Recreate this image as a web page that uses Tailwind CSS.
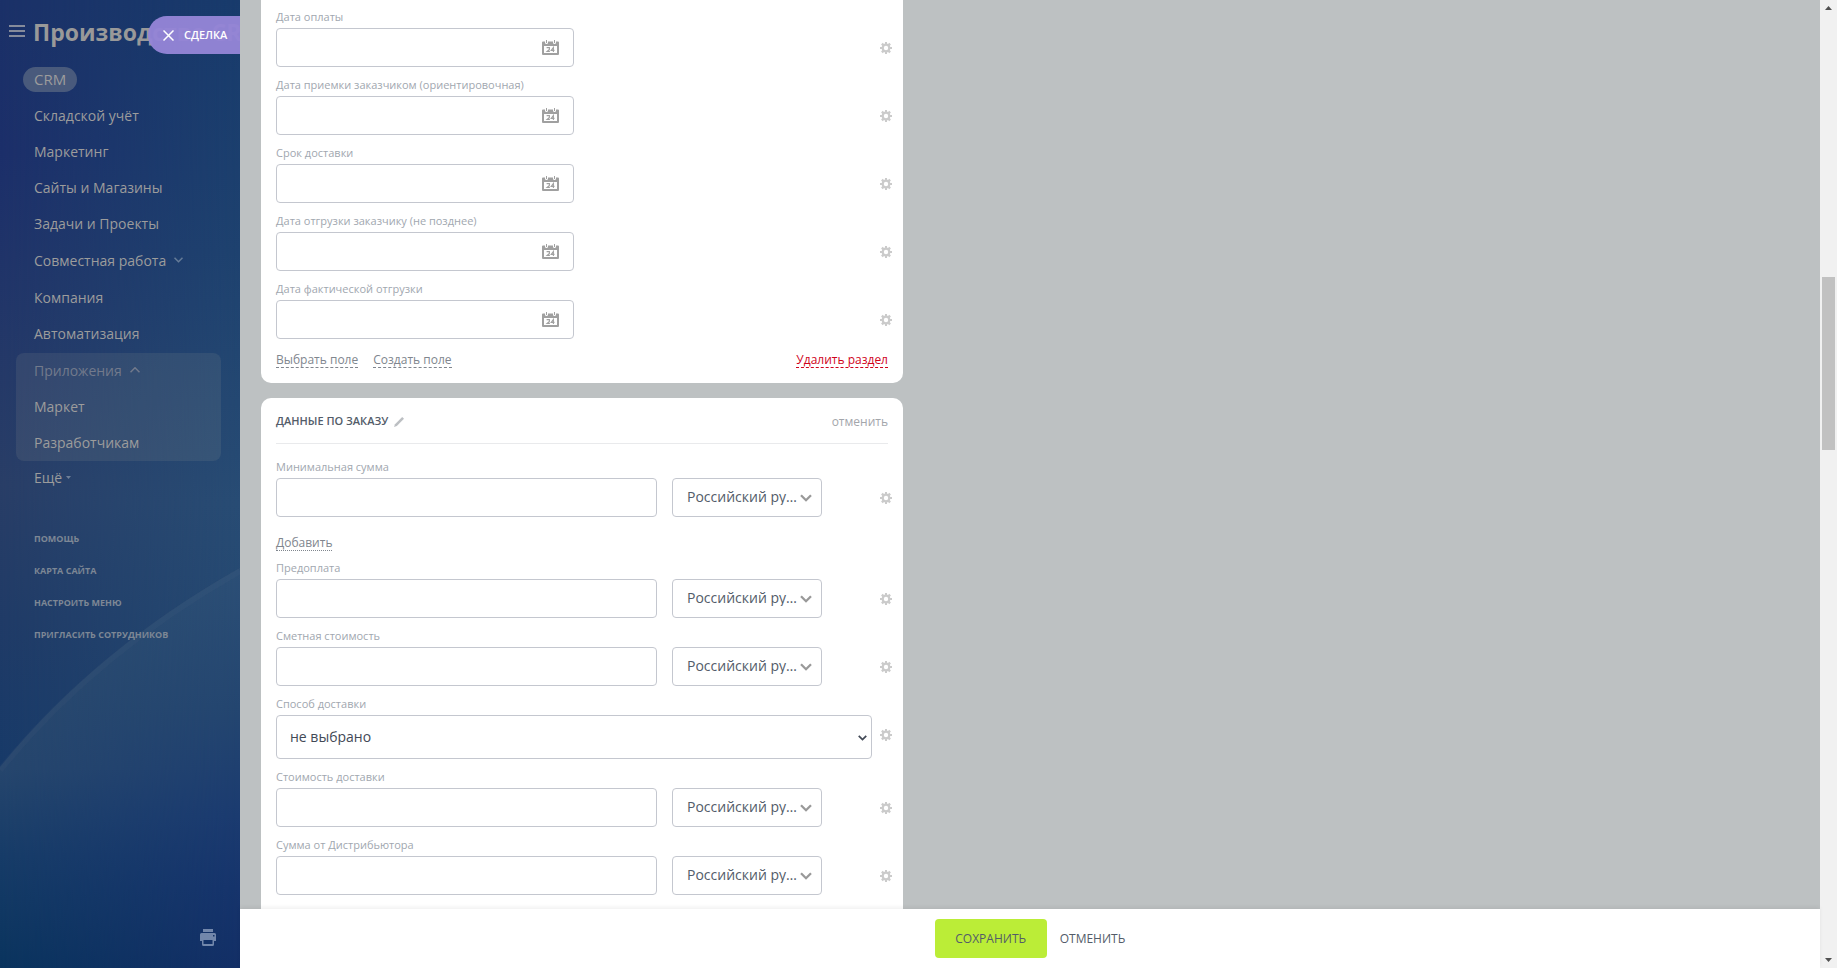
<!DOCTYPE html>
<html lang="ru">
<head>
    <meta charset="UTF-8">
    <meta name="viewport" content="width=device-width, initial-scale=1.0">
    <title>Сделка</title>
    <script src="https://cdn.jsdelivr.net/npm/@tailwindcss/browser@4"></script>
</head>
<body class="flex h-screen overflow-hidden bg-[#bdc1c2] font-['Open_Sans','Noto_Sans',sans-serif] text-[#535c69]">

    <!-- Иконки -->
    <svg class="hidden">
        <symbol id="gear" viewBox="0 0 12 12">
            <path fill="#cbcbcb" fill-rule="evenodd" d="M5 0h2v1.600l1 .4 1.300-1.200 1.600 1.600L9.800 3.800l.5 1.200H12v2h-1.700l-.5 1.200 1.100 1.400-1.600 1.600L8 10l-1 .4V12H5v-1.600L4 10l-1.300 1.200-1.600-1.600L2.200 8.200 1.700 7H0V5h1.700l.5-1.200L1.100 2.400 2.700.8 4 2l1-.4zM6 3.800a2.200 2.200 0 1 0 0 4.400 2.200 2.200 0 0 0 0-4.400z"/>
        </symbol>
        <symbol id="calendar" viewBox="0 0 17 15">
            <path fill="#a0a0a0" fill-rule="evenodd" d="M1 1.500h2v1a1.500 1.500 0 0 0 3 0v-1h5v1a1.500 1.500 0 0 0 3 0v-1h2a1 1 0 0 1 1 1V14a1 1 0 0 1-1 1H1a1 1 0 0 1-1-1V2.500a1 1 0 0 1 1-1zM2 6v7h13V6z"/>
            <path fill="#a0a0a0" d="M4 0h1v3H4zM12 0h1v3h-1z"/>
            <path fill="none" stroke="#a0a0a0" stroke-width="1.100" d="M4.600 7.600h2.800v1.900L5.100 11.400h2.800M11.400 12V7.500L9.200 10.400h3.300"/>
        </symbol>
        <symbol id="chevron" viewBox="0 0 12 8">
            <path fill="none" stroke="currentColor" stroke-width="2.300" d="M1 1.200l5 5 5-5"/>
        </symbol>
    </svg>

    <!-- Левое меню -->
    <aside class="relative flex w-60 shrink-0 flex-col overflow-hidden">
        <svg class="absolute inset-0 -z-10 h-full w-full" viewBox="0 0 240 968" preserveAspectRatio="none">
            <defs>
                <linearGradient id="skyLeft" x1="0" y1="0" x2="0" y2="1">
                    <stop offset="0" stop-color="#1b3168"/>
                    <stop offset=".16" stop-color="#1c2f6a"/>
                    <stop offset=".5" stop-color="#293e67"/>
                    <stop offset=".64" stop-color="#203b67"/>
                    <stop offset=".8" stop-color="#173a69"/>
                </linearGradient>
                <linearGradient id="skyRight" x1="0" y1="0" x2="0" y2="1">
                    <stop offset="0" stop-color="#183b6c"/>
                    <stop offset=".26" stop-color="#1e426f"/>
                    <stop offset=".52" stop-color="#284c74"/>
                    <stop offset=".7" stop-color="#234770"/>
                </linearGradient>
                <linearGradient id="hillLeft" gradientUnits="userSpaceOnUse" x1="0" y1="568" x2="0" y2="968">
                    <stop offset="0" stop-color="#2c4b6f"/>
                    <stop offset=".5" stop-color="#26466d"/>
                    <stop offset=".72" stop-color="#173c68"/>
                    <stop offset="1" stop-color="#0a345e"/>
                </linearGradient>
                <linearGradient id="hillRight" gradientUnits="userSpaceOnUse" x1="0" y1="568" x2="0" y2="968">
                    <stop offset="0" stop-color="#2c4f76"/>
                    <stop offset=".35" stop-color="#244670"/>
                    <stop offset=".62" stop-color="#1b3b70"/>
                    <stop offset=".8" stop-color="#16346c"/>
                    <stop offset="1" stop-color="#132f66"/>
                </linearGradient>
                <linearGradient id="fade" x1="0" y1="0" x2="1" y2="0">
                    <stop offset="0" stop-color="#000"/>
                    <stop offset="1" stop-color="#fff"/>
                </linearGradient>
                <mask id="toRight"><rect width="240" height="968" fill="url(#fade)"/></mask>
            </defs>
            <rect width="240" height="968" fill="url(#skyLeft)"/>
            <rect width="240" height="968" fill="url(#skyRight)" mask="url(#toRight)"/>
            <path d="M240 568Q95 650 0 767V968H240z" fill="url(#hillLeft)"/>
            <path d="M240 568Q95 650 0 767V968H240z" fill="url(#hillRight)" mask="url(#toRight)"/>
            <path d="M240 571Q95 653 0 770" fill="none" stroke="#8a9099" stroke-opacity=".05" stroke-width="6"/>
        </svg>

        <header class="flex h-[61px] items-center gap-2 pb-1.5 pl-[9px]">
            <button type="button" aria-label="Меню" class="flex w-4 shrink-0 flex-col gap-[3px] pt-1.5">
                <span class="h-0.5 bg-[#858b9b]"></span>
                <span class="h-0.5 bg-[#858b9b]"></span>
                <span class="h-0.5 bg-[#858b9b]"></span>
            </button>
            <a href="#" class="pt-2 text-[23px] font-bold leading-7 whitespace-nowrap text-[#999]">Производство CRM</a>
        </header>
        <button type="button" class="absolute top-4 right-0 flex h-[38px] w-[92px] items-center gap-2.5 rounded-l-full bg-[#9484d6]/97 pl-[15px] text-[11px] font-semibold text-white">
            <svg class="h-[11px] w-[11px]" viewBox="0 0 11 11"><path stroke="#fff" stroke-width="1.500" d="M.5.5l10 10M10.500.5l-10 10"/></svg>
            СДЕЛКА
        </button>

        <nav class="text-[14px] text-[#9c9c9c]">
            <div class="flex h-9 items-center pl-[23px]">
                <a href="#" class="flex h-[25px] items-center rounded-full bg-[#495a7c] px-[11px] text-[15px]">CRM</a>
            </div>
            <a href="#" class="flex h-9 items-center pl-[34px]">Складской учёт</a>
            <a href="#" class="flex h-9 items-center pl-[34px]">Маркетинг</a>
            <a href="#" class="flex h-9 items-center pl-[34px]">Сайты и Магазины</a>
            <a href="#" class="flex h-9 items-center pl-[34px]">Задачи и Проекты</a>
            <a href="#" class="flex h-[38px] items-center gap-2 pl-[34px]">Совместная работа
                <svg class="h-[6px] w-[9px] text-[#667c98]" viewBox="0 0 9 6"><path fill="none" stroke="currentColor" stroke-width="1.500" d="M.5.8l4 4 4-4"/></svg>
            </a>
            <a href="#" class="flex h-[37px] items-center pl-[34px]">Компания</a>
            <a href="#" class="flex h-9 items-center pb-0.5 pl-[34px]">Автоматизация</a>
            <div class="mr-[19px] ml-4 mt-px rounded-lg bg-[#b0a99f]/12">
                <a href="#" class="flex h-9 items-center gap-2 pb-0.5 pl-[18px] text-[#727a8c]">Приложения
                    <svg class="h-[6px] w-[10px]" viewBox="0 0 10 6"><path fill="none" stroke="currentColor" stroke-width="1.500" d="M.5 5.200l4.500-4.400 4.500 4.400"/></svg>
                </a>
                <a href="#" class="flex h-9 items-center pb-0.5 pl-[18px]">Маркет</a>
                <a href="#" class="flex h-9 items-center pb-0.5 pl-[18px]">Разработчикам</a>
            </div>
            <a href="#" class="flex h-[34px] items-center gap-1 pb-0.5 pl-[34px]">Ещё
                <svg class="h-[3px] w-[5px]" viewBox="0 0 5 3"><path fill="#6f7f98" d="M0 0h5L2.500 3z"/></svg>
            </a>
        </nav>

        <nav class="mt-7 text-[9px] font-bold text-[#7d8795]">
            <a href="#" class="flex h-8 items-center pl-[34px]">ПОМОЩЬ</a>
            <a href="#" class="flex h-8 items-center pl-[34px]">КАРТА САЙТА</a>
            <a href="#" class="flex h-8 items-center pl-[34px]">НАСТРОИТЬ МЕНЮ</a>
            <a href="#" class="flex h-8 items-center pl-[34px]">ПРИГЛАСИТЬ СОТРУДНИКОВ</a>
        </nav>

        <button type="button" aria-label="Печать" class="mt-auto mr-6 mb-[22px] self-end">
            <svg class="h-[17px] w-4" viewBox="0 0 16 17">
                <path fill="#7287ab" fill-rule="evenodd" d="M3 0h10v3H3zM1.500 4h13A1.500 1.500 0 0 1 16 5.500V12h-2v3.500a1.500 1.500 0 0 1-1.500 1.500h-9A1.500 1.500 0 0 1 2 15.500V12H0V5.500A1.500 1.500 0 0 1 1.500 4zM3.500 11v4h9v-4zM13 6v1.500h1.500V6z"/>
            </svg>
        </button>
    </aside>

    <!-- Карточка сделки -->
    <div class="flex min-w-0 flex-1 flex-col">
        <main class="min-h-0 flex-1 overflow-hidden pl-[21px]">

            <section class="w-[642px] max-w-full rounded-b-[10px] bg-white pt-[9px] pr-[11px] pb-[15px] pl-[15px]">
                <div class="flex flex-col gap-2.5 text-[11px] leading-4 text-[#a1a7af]">
                    <div>
                        <label for="payDate" class="block">Дата оплаты</label>
                        <div class="mt-[3px] flex items-center gap-2">
                            <div class="flex-1">
                                <div class="relative w-1/2">
                                    <input id="payDate" type="text" class="block h-[39px] w-full rounded border border-[#c4c7cf] pr-10 pl-3 text-[14px] text-[#535c69]">
                                    <svg class="absolute top-3 right-[15px] h-[15px] w-[17px]"><use href="#calendar"/></svg>
                                </div>
                            </div>
                            <button type="button" aria-label="Настройки" class="pt-px"><svg class="h-3 w-3"><use href="#gear"/></svg></button>
                        </div>
                    </div>
                    <div>
                        <label for="acceptDate" class="block">Дата приемки заказчиком (ориентировочная)</label>
                        <div class="mt-[3px] flex items-center gap-2">
                            <div class="flex-1">
                                <div class="relative w-1/2">
                                    <input id="acceptDate" type="text" class="block h-[39px] w-full rounded border border-[#c4c7cf] pr-10 pl-3 text-[14px] text-[#535c69]">
                                    <svg class="absolute top-3 right-[15px] h-[15px] w-[17px]"><use href="#calendar"/></svg>
                                </div>
                            </div>
                            <button type="button" aria-label="Настройки" class="pt-px"><svg class="h-3 w-3"><use href="#gear"/></svg></button>
                        </div>
                    </div>
                    <div>
                        <label for="deliveryDate" class="block">Срок доставки</label>
                        <div class="mt-[3px] flex items-center gap-2">
                            <div class="flex-1">
                                <div class="relative w-1/2">
                                    <input id="deliveryDate" type="text" class="block h-[39px] w-full rounded border border-[#c4c7cf] pr-10 pl-3 text-[14px] text-[#535c69]">
                                    <svg class="absolute top-3 right-[15px] h-[15px] w-[17px]"><use href="#calendar"/></svg>
                                </div>
                            </div>
                            <button type="button" aria-label="Настройки" class="pt-px"><svg class="h-3 w-3"><use href="#gear"/></svg></button>
                        </div>
                    </div>
                    <div>
                        <label for="shipDate" class="block">Дата отгрузки заказчику (не позднее)</label>
                        <div class="mt-[3px] flex items-center gap-2">
                            <div class="flex-1">
                                <div class="relative w-1/2">
                                    <input id="shipDate" type="text" class="block h-[39px] w-full rounded border border-[#c4c7cf] pr-10 pl-3 text-[14px] text-[#535c69]">
                                    <svg class="absolute top-3 right-[15px] h-[15px] w-[17px]"><use href="#calendar"/></svg>
                                </div>
                            </div>
                            <button type="button" aria-label="Настройки" class="pt-px"><svg class="h-3 w-3"><use href="#gear"/></svg></button>
                        </div>
                    </div>
                    <div>
                        <label for="factDate" class="block">Дата фактической отгрузки</label>
                        <div class="mt-[3px] flex items-center gap-2">
                            <div class="flex-1">
                                <div class="relative w-1/2">
                                    <input id="factDate" type="text" class="block h-[39px] w-full rounded border border-[#c4c7cf] pr-10 pl-3 text-[14px] text-[#535c69]">
                                    <svg class="absolute top-3 right-[15px] h-[15px] w-[17px]"><use href="#calendar"/></svg>
                                </div>
                            </div>
                            <button type="button" aria-label="Настройки" class="pt-px"><svg class="h-3 w-3"><use href="#gear"/></svg></button>
                        </div>
                    </div>
                </div>
                <div class="mt-3.5 mr-1 flex gap-[15px] text-[12px] leading-[14px] text-[#80868e]">
                    <a href="#" class="border-b border-dashed border-[#80868e]">Выбрать поле</a>
                    <a href="#" class="border-b border-dashed border-[#80868e]">Создать поле</a>
                    <a href="#" class="ml-auto border-b border-dashed border-[#d0021b] text-[#d0021b]">Удалить раздел</a>
                </div>
            </section>

            <section class="mt-[15px] w-[642px] max-w-full rounded-t-[10px] bg-white pr-[11px] pb-4 pl-[15px]">
                <header class="mr-1 flex h-[46px] items-center border-b border-[#e9eaec] pt-0.5">
                    <h2 class="text-[11px] font-semibold">ДАННЫЕ ПО ЗАКАЗУ</h2>
                    <button type="button" aria-label="Переименовать" class="ml-1.5">
                        <svg class="h-2.5 w-2.5" viewBox="0 0 10 10"><path fill="#bcbfc3" d="M8.200 0L10 1.800 2.800 9 0 10l1-2.800z"/></svg>
                    </button>
                    <button type="button" class="ml-auto text-[12px] text-[#a3a6ab]">отменить</button>
                </header>

                <div class="mt-[15px] flex flex-col gap-2.5 text-[11px] leading-4 text-[#a1a7af]">
                    <div>
                        <label for="minSum" class="block">Минимальная сумма</label>
                        <div class="mt-[3px] flex items-center gap-2">
                            <div class="flex flex-1 gap-[15px] pr-[50px]">
                                <input id="minSum" type="text" class="h-[39px] min-w-0 flex-1 rounded border border-[#c4c7cf] px-3 text-[14px] text-[#535c69]">
                                <div class="relative w-[150px]">
                                    <select aria-label="Валюта" class="block h-[39px] w-full appearance-none rounded border border-[#c4c7cf] pr-5 pb-0.5 pl-3.5 text-[14px] text-ellipsis text-[#535c69]"><option>Российский рубль</option></select>
                                    <svg class="pointer-events-none absolute top-4 right-2.5 h-2 w-3 text-[#999]"><use href="#chevron"/></svg>
                                </div>
                            </div>
                            <button type="button" aria-label="Настройки" class="pt-px"><svg class="h-3 w-3"><use href="#gear"/></svg></button>
                        </div>
                        <div class="mt-[19px] flex text-[12px] leading-[14px] text-[#80868e]">
                            <a href="#" class="border-b border-dotted border-[#80868e]">Добавить</a>
                        </div>
                    </div>
                    <div class="-mt-px">
                        <label for="prepay" class="block">Предоплата</label>
                        <div class="mt-[3px] flex items-center gap-2">
                            <div class="flex flex-1 gap-[15px] pr-[50px]">
                                <input id="prepay" type="text" class="h-[39px] min-w-0 flex-1 rounded border border-[#c4c7cf] px-3 text-[14px] text-[#535c69]">
                                <div class="relative w-[150px]">
                                    <select aria-label="Валюта" class="block h-[39px] w-full appearance-none rounded border border-[#c4c7cf] pr-5 pb-0.5 pl-3.5 text-[14px] text-ellipsis text-[#535c69]"><option>Российский рубль</option></select>
                                    <svg class="pointer-events-none absolute top-4 right-2.5 h-2 w-3 text-[#999]"><use href="#chevron"/></svg>
                                </div>
                            </div>
                            <button type="button" aria-label="Настройки" class="pt-px"><svg class="h-3 w-3"><use href="#gear"/></svg></button>
                        </div>
                    </div>
                    <div>
                        <label for="estimate" class="block">Сметная стоимость</label>
                        <div class="mt-[3px] flex items-center gap-2">
                            <div class="flex flex-1 gap-[15px] pr-[50px]">
                                <input id="estimate" type="text" class="h-[39px] min-w-0 flex-1 rounded border border-[#c4c7cf] px-3 text-[14px] text-[#535c69]">
                                <div class="relative w-[150px]">
                                    <select aria-label="Валюта" class="block h-[39px] w-full appearance-none rounded border border-[#c4c7cf] pr-5 pb-0.5 pl-3.5 text-[14px] text-ellipsis text-[#535c69]"><option>Российский рубль</option></select>
                                    <svg class="pointer-events-none absolute top-4 right-2.5 h-2 w-3 text-[#999]"><use href="#chevron"/></svg>
                                </div>
                            </div>
                            <button type="button" aria-label="Настройки" class="pt-px"><svg class="h-3 w-3"><use href="#gear"/></svg></button>
                        </div>
                    </div>
                    <div>
                        <label for="deliveryType" class="block">Способ доставки</label>
                        <div class="mt-[3px] flex items-start gap-2">
                            <div class="relative flex-1">
                                <select id="deliveryType" class="block h-11 w-full appearance-none rounded border border-[#c4c7cf] pr-6 pl-[13px] text-[14px] text-[#424956]"><option>не выбрано</option></select>
                                <svg class="pointer-events-none absolute top-5 right-[5px] h-1.5 w-[9px] text-[#424956]"><use href="#chevron"/></svg>
                            </div>
                            <button type="button" aria-label="Настройки" class="pt-3.5"><svg class="h-3 w-3"><use href="#gear"/></svg></button>
                        </div>
                    </div>
                    <div>
                        <label for="deliveryCost" class="block">Стоимость доставки</label>
                        <div class="mt-[3px] flex items-center gap-2">
                            <div class="flex flex-1 gap-[15px] pr-[50px]">
                                <input id="deliveryCost" type="text" class="h-[39px] min-w-0 flex-1 rounded border border-[#c4c7cf] px-3 text-[14px] text-[#535c69]">
                                <div class="relative w-[150px]">
                                    <select aria-label="Валюта" class="block h-[39px] w-full appearance-none rounded border border-[#c4c7cf] pr-5 pb-0.5 pl-3.5 text-[14px] text-ellipsis text-[#535c69]"><option>Российский рубль</option></select>
                                    <svg class="pointer-events-none absolute top-4 right-2.5 h-2 w-3 text-[#999]"><use href="#chevron"/></svg>
                                </div>
                            </div>
                            <button type="button" aria-label="Настройки" class="pt-px"><svg class="h-3 w-3"><use href="#gear"/></svg></button>
                        </div>
                    </div>
                    <div>
                        <label for="distributor" class="block">Сумма от Дистрибьютора</label>
                        <div class="mt-[3px] flex items-center gap-2">
                            <div class="flex flex-1 gap-[15px] pr-[50px]">
                                <input id="distributor" type="text" class="h-[39px] min-w-0 flex-1 rounded border border-[#c4c7cf] px-3 text-[14px] text-[#535c69]">
                                <div class="relative w-[150px]">
                                    <select aria-label="Валюта" class="block h-[39px] w-full appearance-none rounded border border-[#c4c7cf] pr-5 pb-0.5 pl-3.5 text-[14px] text-ellipsis text-[#535c69]"><option>Российский рубль</option></select>
                                    <svg class="pointer-events-none absolute top-4 right-2.5 h-2 w-3 text-[#999]"><use href="#chevron"/></svg>
                                </div>
                            </div>
                            <button type="button" aria-label="Настройки" class="pt-px"><svg class="h-3 w-3"><use href="#gear"/></svg></button>
                        </div>
                    </div>
                </div>
            </section>
        </main>

        <!-- Нижняя панель -->
        <footer class="relative flex h-[59px] shrink-0 items-center justify-center gap-[13px] bg-white text-[12px] font-medium shadow-[0_-2px_4px_rgba(0,0,0,0.06)]">
            <button type="submit" class="h-[39px] w-28 rounded bg-[#bbed37]">СОХРАНИТЬ</button>
            <button type="button">ОТМЕНИТЬ</button>
        </footer>
    </div>

    <!-- Полоса прокрутки -->
    <div class="flex w-[17px] shrink-0 flex-col items-center bg-[#f1f1f1]">
        <svg class="mt-1.5 h-1 w-[7px]" viewBox="0 0 7 4"><path fill="#505050" d="M0 4h7L3.500 0z"/></svg>
        <div class="mt-[267px] h-[173px] w-[13px] bg-[#c1c1c1]"></div>
        <svg class="mt-auto mb-1.5 h-1 w-[7px]" viewBox="0 0 7 4"><path fill="#505050" d="M0 0h7L3.500 4z"/></svg>
    </div>
</body>
</html>
